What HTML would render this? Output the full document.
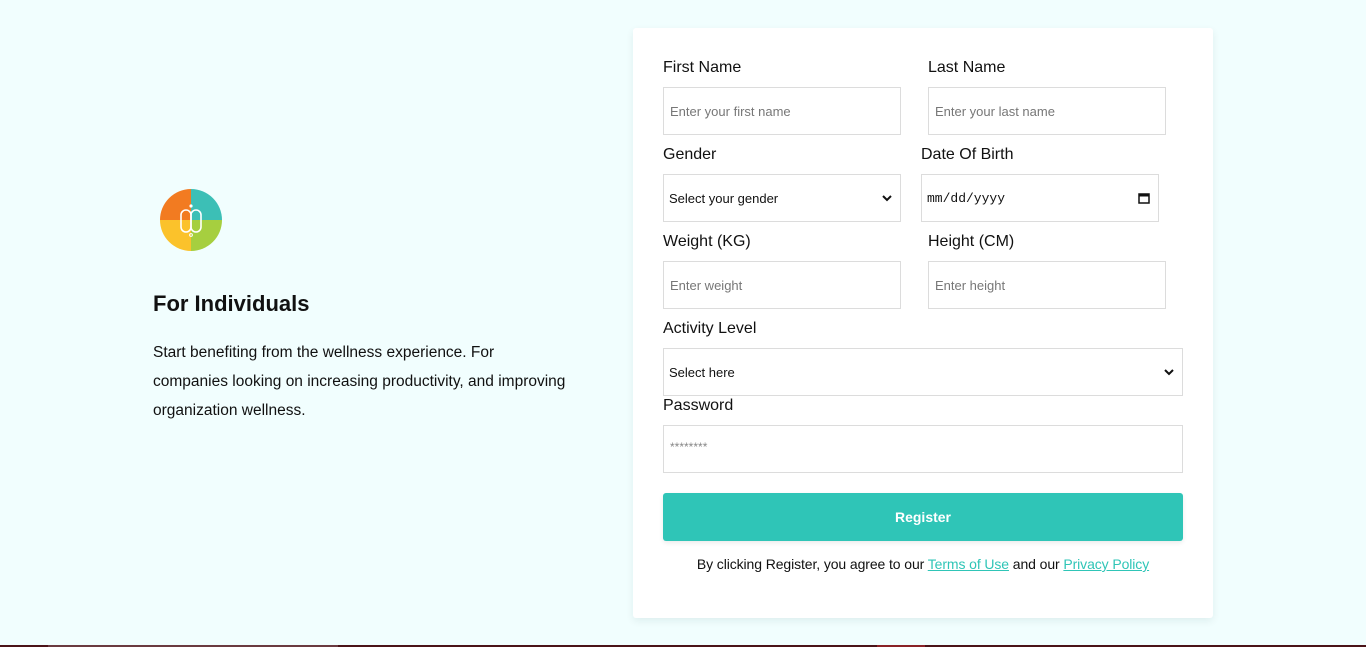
<!DOCTYPE html>
<html><head><meta charset="utf-8"><style>
*{box-sizing:border-box;margin:0;padding:0}
body{width:1366px;height:647px;background:#f1fefe;font-family:"Liberation Sans",sans-serif;position:relative;overflow:hidden;color:#111}
.a{position:absolute}
.card{left:633px;top:28px;width:580px;height:590px;background:#fff;border-radius:3px;box-shadow:0 3px 8px rgba(0,60,60,.08)}
.lbl{font-size:16px;color:#111}
.in{border:1px solid #dcdcdc;background:#fff;height:48px;font-size:13px;color:#777;padding-left:6px;display:flex;align-items:center}
.sel{color:#111;font-size:13px;justify-content:space-between;padding-right:8px;padding-left:5px}
.logo{left:160px;top:189px;width:62px;height:62px;border-radius:50%;background:conic-gradient(#3cbfb6 0 90deg,#a6cf3f 90deg 180deg,#fbc22b 180deg 270deg,#f27b21 270deg 360deg)}
</style></head><body>
<div class="a logo"><svg width="62" height="62" viewBox="0 0 62 62" style="position:absolute;left:0;top:0"><rect x="21" y="21" width="10" height="22" rx="5" fill="none" stroke="#fff" stroke-width="1.6"/><rect x="31" y="21" width="10" height="22" rx="5" fill="none" stroke="#fff" stroke-width="1.6"/><circle cx="31" cy="17" r="1.6" fill="#fff"/><circle cx="31" cy="46" r="1.4" fill="none" stroke="#fff" stroke-width="1"/></svg></div>
<div class="a" style="left:153px;top:291px;font-size:22px;font-weight:bold;color:#111">For Individuals</div>
<div class="a" style="left:153px;top:338px;width:460px;font-size:15.5px;line-height:29px;color:#111;white-space:nowrap">Start benefiting from the wellness experience. For<br>companies looking on increasing productivity, and improving<br>organization wellness.</div>
<div class="a card"></div>
<div class="a lbl" style="left:663px;top:59px">First Name</div>
<div class="a lbl" style="left:928px;top:59px">Last Name</div>
<div class="a in" style="left:663px;top:87px;width:238px">Enter your first name</div>
<div class="a in" style="left:928px;top:87px;width:238px">Enter your last name</div>
<div class="a lbl" style="left:663px;top:146px">Gender</div>
<div class="a lbl" style="left:921px;top:146px">Date Of Birth</div>
<div class="a in sel" style="left:663px;top:174px;width:238px"><span>Select your gender</span><svg width="10" height="7" viewBox="0 0 10 7"><path d="M1 1l4 4 4-4" fill="none" stroke="#111" stroke-width="2"/></svg></div>
<div class="a in sel" style="left:921px;top:174px;width:238px;font-family:'Liberation Mono',monospace;font-size:13px"><span>mm/dd/yyyy</span><svg width="12" height="12" viewBox="0 0 12 12"><rect x="1" y="2" width="10" height="9" fill="none" stroke="#111" stroke-width="1.5"/><rect x="1" y="2" width="10" height="2.5" fill="#111"/></svg></div>
<div class="a lbl" style="left:663px;top:233px">Weight (KG)</div>
<div class="a lbl" style="left:928px;top:233px">Height (CM)</div>
<div class="a in" style="left:663px;top:261px;width:238px">Enter weight</div>
<div class="a in" style="left:928px;top:261px;width:238px">Enter height</div>
<div class="a lbl" style="left:663px;top:320px">Activity Level</div>
<div class="a in sel" style="left:663px;top:348px;width:520px"><span>Select here</span><svg width="10" height="7" viewBox="0 0 10 7"><path d="M1 1l4 4 4-4" fill="none" stroke="#111" stroke-width="2"/></svg></div>
<div class="a lbl" style="left:663px;top:397px">Password</div>
<div class="a in" style="left:663px;top:425px;width:520px;align-items:flex-start;padding-top:14px;font-size:12px;color:#888">********</div>
<div class="a" style="left:663px;top:493px;width:520px;height:48px;background:#2fc5b7;border-radius:3px;color:#fff;font-weight:bold;font-size:14px;display:flex;align-items:center;justify-content:center;box-shadow:0 2px 5px rgba(0,0,0,.08)">Register</div>
<div class="a" style="left:633px;top:556px;width:580px;text-align:center;font-size:14px;color:#111;letter-spacing:-0.1px">By clicking Register, you agree to our <span style="color:#2fc5b7;text-decoration:underline">Terms of Use</span> and our <span style="color:#2fc5b7;text-decoration:underline">Privacy Policy</span></div>
<div class="a" style="left:0;top:645px;width:1366px;height:2px;background:#4a1318"></div>
<div class="a" style="left:48px;top:645px;width:290px;height:2px;background:#6a3a40"></div>
<div class="a" style="left:877px;top:645px;width:48px;height:2px;background:#8a2226"></div>
</body></html>
